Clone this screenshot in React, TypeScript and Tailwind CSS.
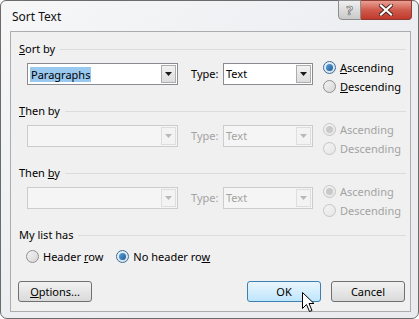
import React from "react";

const font = { fontFamily: '"Noto Sans", "Open Sans", sans-serif' };

function Heading({ children }: { children: React.ReactNode }) {
  return (
    <div className="flex items-center h-[16px] pr-[4px]">
      <span className="leading-[16px] text-[#000]">{children}</span>
      <div className="flex-1 ml-[5px] h-[1px] bg-[#dcdcdc]" />
    </div>
  );
}

function Arrow({ disabled }: { disabled?: boolean }) {
  return (
    <svg width="7" height="4" viewBox="0 0 7 4">
      <path d="M0 0 H7 L3.5 4 Z" fill={disabled ? "#b8b8b8" : "#1a1a1a"} />
    </svg>
  );
}

function Combo({
  width,
  disabled,
  children,
}: {
  width: string;
  disabled?: boolean;
  children?: React.ReactNode;
}) {
  return (
    <div
      className={`flex h-[22px] ${width} border ${
        disabled ? "border-[#cccccc] bg-[#f5f5f5]" : "border-[#8a8c91] bg-white"
      }`}
    >
      <div className="flex-1 flex items-center pl-[2px] overflow-hidden">{children}</div>
      <div
        className={`m-[1px] w-[15px] flex items-center justify-center border ${
          disabled
            ? "border-[#dedede] bg-[#f3f3f3]"
            : "border-[#adadad] bg-gradient-to-b from-[#f2f2f2] to-[#dddddd]"
        }`}
      >
        <Arrow disabled={disabled} />
      </div>
    </div>
  );
}

function Radio({
  checked,
  disabled,
  children,
}: {
  checked?: boolean;
  disabled?: boolean;
  children: React.ReactNode;
}) {
  return (
    <div className="flex items-center h-[19px]">
      <div
        className={`w-[13px] h-[13px] rounded-full border flex items-center justify-center ${
          disabled
            ? "border-[#c5c5c5] bg-gradient-to-br from-[#f4f4f4] to-[#e6e6e6]"
            : checked
            ? "border-[#3a6f9a] bg-gradient-to-br from-[#eef3f8] to-[#d4dde6]"
            : "border-[#8e8f8f] bg-gradient-to-br from-[#f4f4f4] to-[#d6d6d6]"
        }`}
      >
        {checked && (
          <div
            className={`w-[7px] h-[7px] rounded-full ${
              disabled
                ? "bg-[#c9c9c9]"
                : "bg-gradient-to-br from-[#5aa3e0] to-[#1f5c95]"
            }`}
          />
        )}
      </div>
      <span
        className={`ml-[4px] leading-[16px] ${disabled ? "text-[#a3a3a3]" : "text-[#000]"}`}
      >
        {children}
      </span>
    </div>
  );
}

function SortRow({
  disabled,
  value,
  first,
}: {
  disabled?: boolean;
  value?: React.ReactNode;
  first?: boolean;
}) {
  return (
    <div className="flex items-start h-[38px] mt-[1px] pl-[8px]">
      <div className="mt-[5px]">
        <Combo width="w-[151px]" disabled={disabled}>
          {value}
        </Combo>
      </div>
      <div
        className={`mt-[5px] ml-[13px] w-[32px] h-[22px] flex items-center ${
          disabled ? "text-[#a3a3a3]" : "text-[#000]"
        }`}
      >
        Type:
      </div>
      <div className="mt-[5px]">
        <Combo width="w-[90px]" disabled={disabled}>
          <span className={disabled ? "text-[#a3a3a3]" : "text-[#000]"}>Text</span>
        </Combo>
      </div>
      <div className="ml-[10px] flex flex-col">
        <Radio checked disabled={disabled}>
          {first ? (
            <>
              <u>A</u>scending
            </>
          ) : (
            "Ascending"
          )}
        </Radio>
        <Radio disabled={disabled}>
          {first ? (
            <>
              <u>D</u>escending
            </>
          ) : (
            "Descending"
          )}
        </Radio>
      </div>
    </div>
  );
}

function Button({
  children,
  primary,
}: {
  children: React.ReactNode;
  primary?: boolean;
}) {
  return (
    <div
      className={`w-[74px] h-[21px] rounded-[3px] border flex items-center justify-center leading-[16px] text-[#000] ${
        primary
          ? "border-[#3c7fb1] bg-gradient-to-b from-[#eaf6fd] to-[#bee6fd]"
          : "border-[#707070] bg-gradient-to-b from-[#f2f2f2] to-[#dadada]"
      }`}
    >
      {children}
    </div>
  );
}

export default function App() {
  return (
    <div className="w-[419px] h-[319px] text-[11px] bg-white" style={font}>
      <div className="relative w-[419px] h-[319px] rounded-t-[6px] rounded-b-[7px] border border-[#6b6b6b] bg-gradient-to-br from-[#f7f7f8] via-[#eceef1] to-[#e9ebee] flex flex-col">
        {/* title bar */}
        <div className="flex items-start h-[30px]">
          <div className="pl-[11px] pt-[8px] leading-[16px] text-[12px] text-[#111]">Sort Text</div>
          <div className="flex-1" />
          <div className="flex mr-[6px] -mt-[1px]">
            <div className="w-[23px] h-[20px] rounded-bl-[4px] border border-[#8d8d8d] bg-gradient-to-b from-[#f0f0f0] to-[#c9c9c9] flex items-center justify-center">
              <span
                className="text-[13px] leading-[13px] text-[#f5f5f5] font-bold"
                style={{ WebkitTextStroke: "0.6px #555" } as React.CSSProperties}
              >
                ?
              </span>
            </div>
            <div className="w-[51px] h-[20px] rounded-br-[4px] border border-l-0 border-[#8e3b32] bg-gradient-to-b from-[#e8a093] via-[#cf5a4c] to-[#c0392b] flex items-center justify-center">
              <svg width="14" height="12" viewBox="0 0 14 12">
                <path d="M2 1.5 L12 10.5 M12 1.5 L2 10.5" stroke="#4a2420" strokeWidth="4" strokeLinecap="square" />
                <path d="M2 1.5 L12 10.5 M12 1.5 L2 10.5" stroke="#ffffff" strokeWidth="2.2" strokeLinecap="square" />
              </svg>
            </div>
          </div>
        </div>
        {/* client */}
        <div className="ml-[9px] mr-[7px] h-[281px] border border-[#acacac] bg-[#f0f0f0] flex flex-col pl-[8px] pt-[9px]">
          <Heading>
            <u>S</u>ort by
          </Heading>
          <SortRow
            first
            value={
              <span className="bg-[#99c9ef] text-[#000] leading-[15px] px-[1px]">Paragraphs</span>
            }
          />
          <div className="mt-[7px]">
            <Heading>
              <u>T</u>hen by
            </Heading>
          </div>
          <SortRow disabled />
          <div className="mt-[7px]">
            <Heading>
              Then <u>b</u>y
            </Heading>
          </div>
          <SortRow disabled />
          <div className="mt-[7px]">
            <Heading>My list has</Heading>
          </div>
          <div className="flex mt-[4px] pl-[7px]">
            <Radio>
              Header <u>r</u>ow
            </Radio>
            <div className="ml-[13px]">
              <Radio checked>
                No header ro<u>w</u>
              </Radio>
            </div>
          </div>
          <div className="flex mt-[15px] pr-[5px] -ml-[1px]">
            <Button>
              <u>O</u>ptions...
            </Button>
            <div className="flex-1" />
            <Button primary>OK</Button>
            <div className="w-[10px]" />
            <Button>Cancel</Button>
          </div>
        </div>
        {/* mouse cursor */}
        <svg
          className="absolute left-[301px] top-[291px]"
          width="13"
          height="21"
          viewBox="0 0 13 21"
        >
          <path
            d="M0.5 0.5 L0.5 16.5 L4.5 12.5 L7.5 19.5 L10 18.5 L7 11.5 L12 11.5 Z"
            fill="#ffffff"
            stroke="#000000"
            strokeWidth="1"
            strokeLinejoin="round"
          />
        </svg>
      </div>
    </div>
  );
}
